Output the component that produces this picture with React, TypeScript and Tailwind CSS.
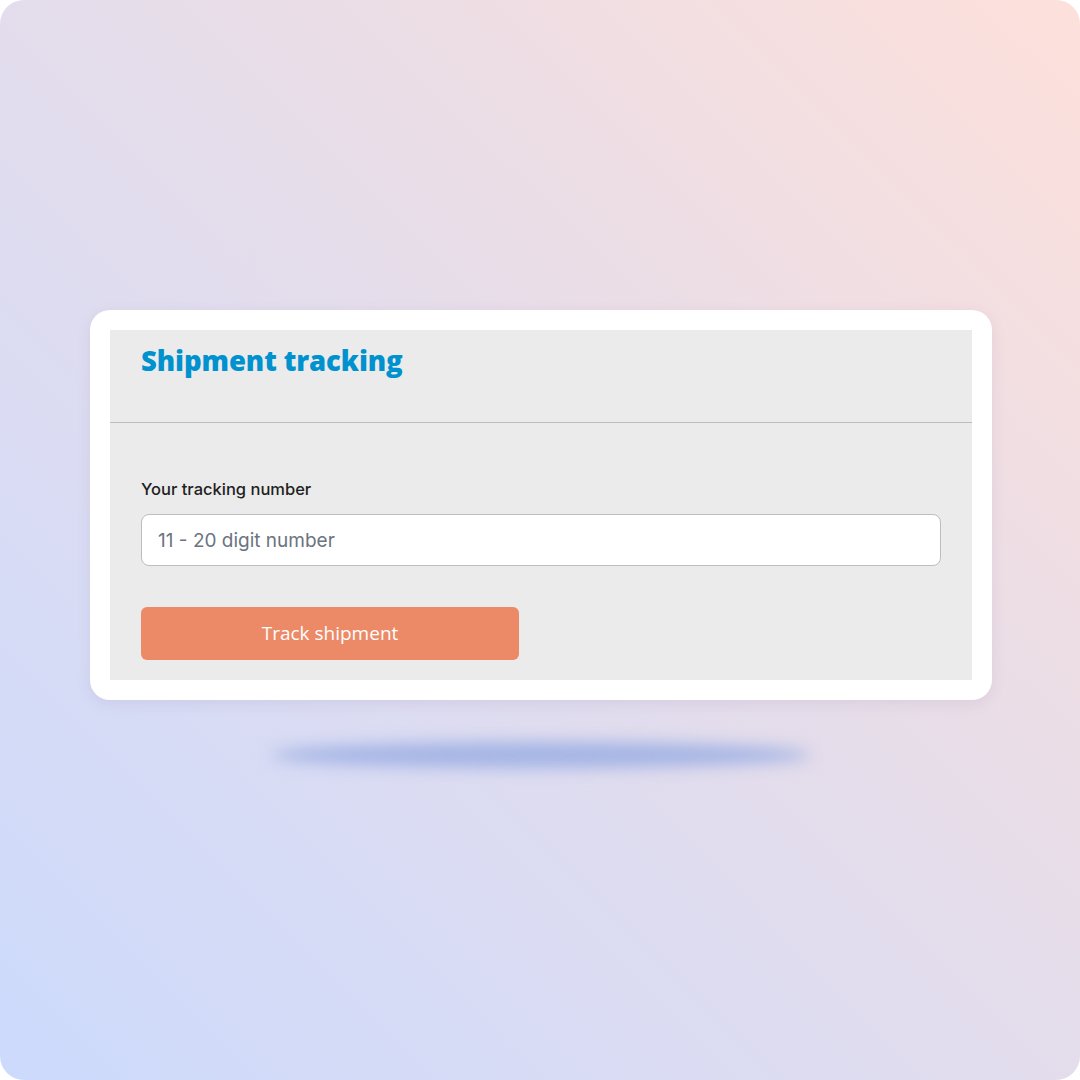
export default function App() {
  return (
    <div className="w-[1080px] h-[1080px] bg-white">
      <div className="w-full h-full rounded-[24px] bg-[linear-gradient(45deg,#ccdafc_0%,#dcdcf2_35%,#e8dde8_60%,#fde0db_100%)] flex flex-col items-center pt-[310px] pl-[2px] font-['Inter',sans-serif]">
        <div className="w-[902px] bg-white rounded-[20px] p-5 shadow-[0_4px_14px_rgba(120,110,150,0.12)]">
          <div className="bg-[#ebebeb]">
            <div className="h-[93px] px-[31px] pt-[10px] border-b border-[#bdbdbd]">
              <h1 className="text-[#0091cf] text-[27.5px] font-extrabold tracking-[-0.1px] font-['Open_Sans',sans-serif]">
                Shipment tracking
              </h1>
            </div>
            <div className="px-[31px] pt-[56px] pb-[20px]">
              <label className="block text-[16.5px] font-medium text-[#1f1f1f] leading-5">Your tracking number</label>
              <input
                className="mt-[15px] w-[800px] h-[52px] rounded-lg border border-[#bdbdbd] bg-white px-4 text-[19px] text-[#333] placeholder:text-[#6b7480] outline-none"
                placeholder="11 - 20 digit number"
              />
              <button className="mt-[41px] w-[378px] h-[53px] rounded-md bg-[#ec8a67] text-white text-[19px] font-['Open_Sans',sans-serif]">
                Track shipment
              </button>
            </div>
          </div>
        </div>
        <div className="mt-[42px] w-[540px] h-[26px] rounded-[50%] bg-[#a4b4e4] blur-[8px]" />
      </div>
    </div>
  );
}
